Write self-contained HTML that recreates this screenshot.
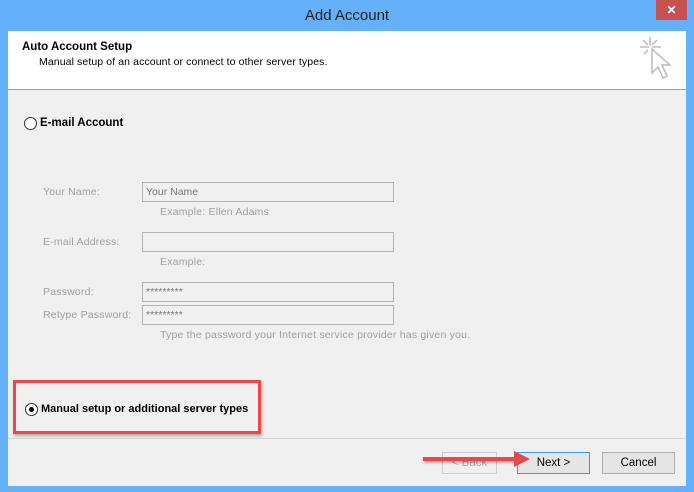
<!DOCTYPE html>
<html><head><style>
body{margin:0;width:694px;height:492px;background:#64b1f9;position:relative;overflow:hidden;font-family:"Liberation Sans",sans-serif;}
.a{position:absolute}
.title{left:0;top:0;width:694px;height:31px;text-align:center;line-height:31px;font-size:15px;color:#222}
.close{left:656px;top:0;width:31px;height:20px;background:#c75050;color:#fff;text-align:center;font-size:12px;line-height:20px;font-weight:bold}
.head{left:8px;top:31px;width:678px;height:58px;background:#fff;border-bottom:1px solid #a0a0a0}
.body{left:8px;top:90px;width:678px;height:396px;background:#f0f0f0}
.lbl{font-size:10.5px;color:#a0a0a0;letter-spacing:0.2px}
.box{width:252px;height:20px;border:1px solid #b4b4b4;background:#f0f0f0;font-size:10.5px;color:#777;line-height:18px;padding-left:3px;box-sizing:border-box}
.btn{height:20px;border:1px solid #adadad;background:#e5e5e5;font-size:11.5px;text-align:center;line-height:20px;color:#000}
.radio{width:11px;height:11px;border:1px solid #333;border-radius:50%;background:#fff}
</style></head><body>
<div class="a title">Add Account</div>
<div class="a close">✕</div>
<div class="a head">
 <div class="a" style="left:14px;top:10px;font-size:11.5px;font-weight:bold">Auto Account Setup</div>
 <div class="a" style="left:31px;top:25px;font-size:10.5px;letter-spacing:0.1px">Manual setup of an account or connect to other server types.</div>
 <svg class="a" style="left:630px;top:4px" width="40" height="52" viewBox="0 0 40 52" fill="none" stroke="#bbb" stroke-width="1.5">
  <path d="M12 2v9M2 12h9M5 5l5 5M19 5l-5 5M23 12h-9M6 19l4-4"/>
  <path d="M14 14v24l6-6l5 11l4-2l-5-11h8z"/>
 </svg>
</div>
<div class="a body"></div>
<div class="a radio" style="left:24px;top:117px"></div>
<div class="a" style="left:40px;top:117px;font-size:11.5px;font-weight:bold">E-mail Account</div>
<div class="a lbl" style="left:43px;top:186px">Your Name:</div>
<div class="a box" style="left:142px;top:182px">Your Name</div>
<div class="a lbl" style="left:160px;top:206px">Example: Ellen Adams</div>
<div class="a lbl" style="left:43px;top:236px">E-mail Address:</div>
<div class="a box" style="left:142px;top:232px"></div>
<div class="a lbl" style="left:160px;top:256px">Example:</div>
<div class="a lbl" style="left:43px;top:286px">Password:</div>
<div class="a box" style="left:142px;top:282px">*********</div>
<div class="a lbl" style="left:43px;top:309px">Retype Password:</div>
<div class="a box" style="left:142px;top:305px">*********</div>
<div class="a lbl" style="left:160px;top:329px">Type the password your Internet service provider has given you.</div>
<div class="a" style="left:13px;top:380px;width:242px;height:48px;border:3px solid #f04848;box-shadow:1px 2px 3px rgba(0,0,0,.3)"></div>
<div class="a radio" style="left:25px;top:403px"><div class="a" style="left:3px;top:3px;width:5px;height:5px;border-radius:50%;background:#000"></div></div>
<div class="a" style="left:41px;top:403px;font-size:11px;font-weight:bold">Manual setup or additional server types</div>
<div class="a" style="left:8px;top:438px;width:678px;height:1px;background:#d5d5d5"></div>
<div class="a btn" style="left:442px;top:452px;width:53px;color:#aaa;background:#f0f0f0;border-color:#ccc">&lt; Back</div>
<div class="a btn" style="left:517px;top:452px;width:71px;border-color:#3c9be8">Next &gt;</div>
<div class="a btn" style="left:602px;top:452px;width:71px">Cancel</div>
<div class="a" style="left:423px;top:457px;width:92px;height:4px;background:#e84848;box-shadow:1px 2px 2px rgba(0,0,0,.3)"></div>
<div class="a" style="left:514px;top:451px;width:0;height:0;border-top:8px solid transparent;border-bottom:8px solid transparent;border-left:16px solid #e84848"></div>
</body></html>
